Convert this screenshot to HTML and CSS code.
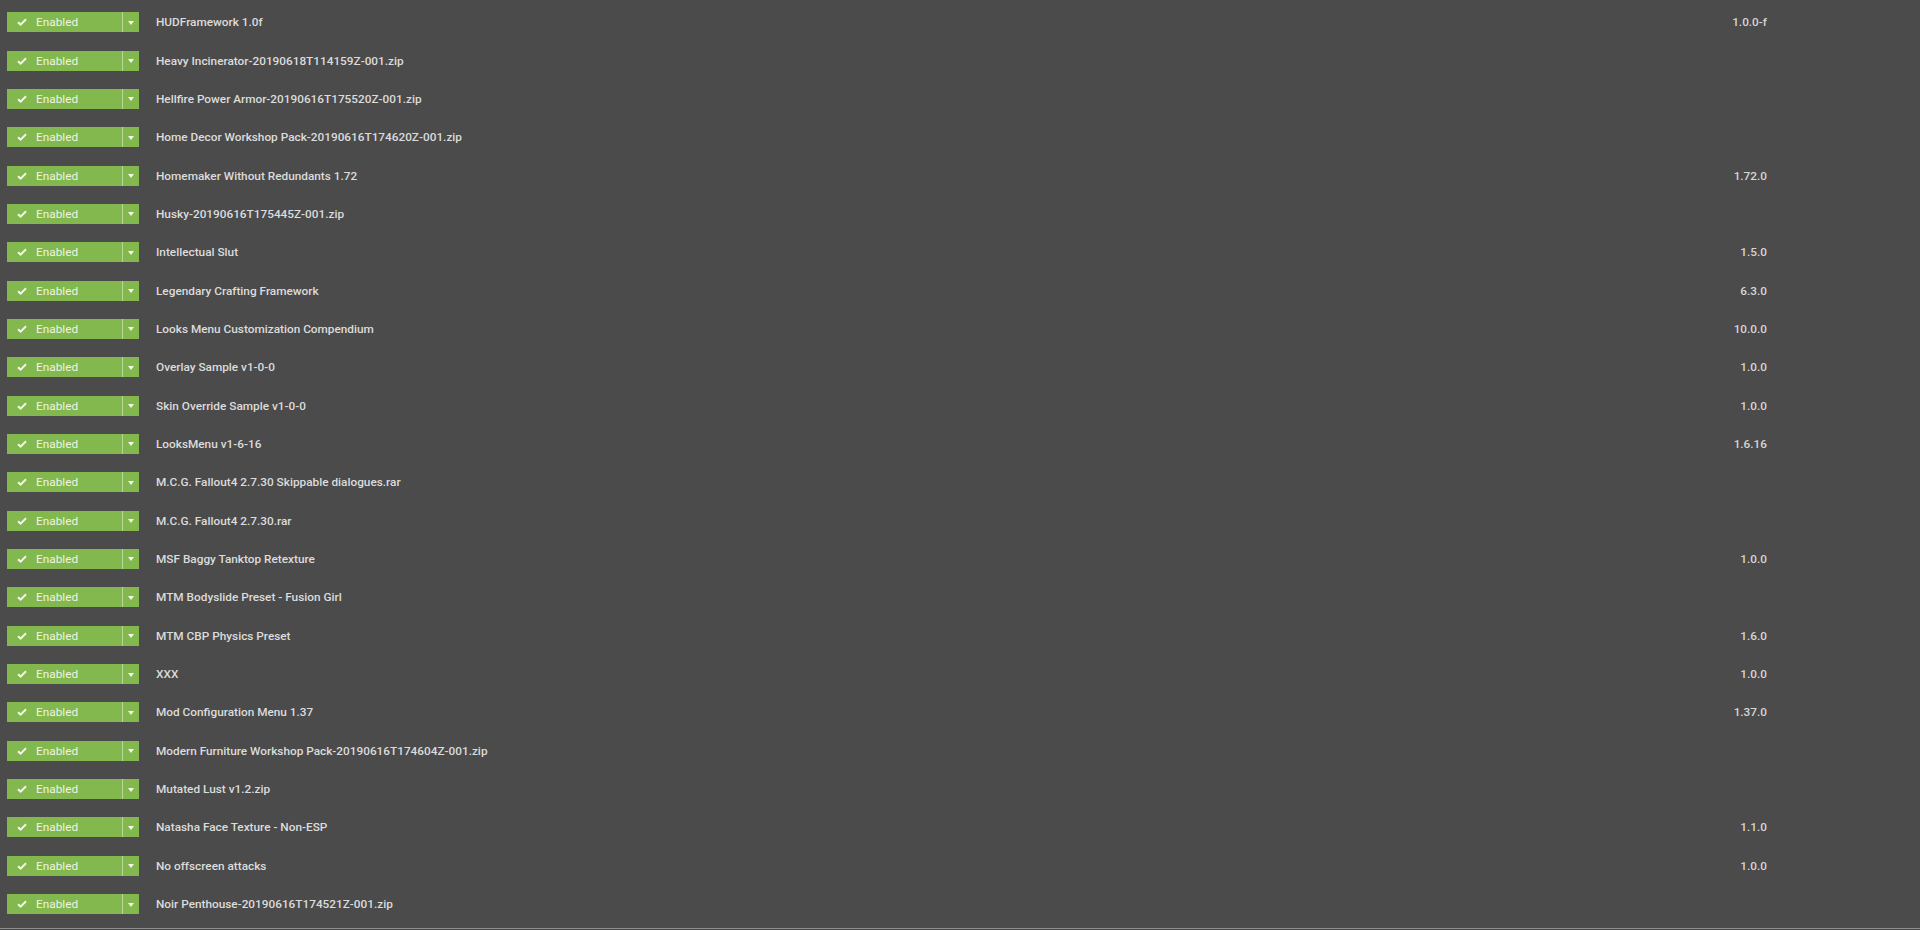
FILE: index.html
```html
<!DOCTYPE html>
<html>
<head>
<meta charset="utf-8">
<link rel="stylesheet" href="styles.css">
</head>
<body>
<div class="list">
  <div class="row"><div class="toggle"><span class="main"><svg class="check" viewBox="0 0 10 8"><path d="M1 4.2 L3.6 6.6 L9 1.2" /></svg>Enabled</span><span class="drop"><i class="tri"></i></span></div><div class="name">HUDFramework 1.0f</div><div class="ver">1.0.0-f</div></div>
  <div class="row"><div class="toggle"><span class="main"><svg class="check" viewBox="0 0 10 8"><path d="M1 4.2 L3.6 6.6 L9 1.2" /></svg>Enabled</span><span class="drop"><i class="tri"></i></span></div><div class="name">Heavy Incinerator-20190618T114159Z-001.zip</div><div class="ver"></div></div>
  <div class="row"><div class="toggle"><span class="main"><svg class="check" viewBox="0 0 10 8"><path d="M1 4.2 L3.6 6.6 L9 1.2" /></svg>Enabled</span><span class="drop"><i class="tri"></i></span></div><div class="name">Hellfire Power Armor-20190616T175520Z-001.zip</div><div class="ver"></div></div>
  <div class="row"><div class="toggle"><span class="main"><svg class="check" viewBox="0 0 10 8"><path d="M1 4.2 L3.6 6.6 L9 1.2" /></svg>Enabled</span><span class="drop"><i class="tri"></i></span></div><div class="name">Home Decor Workshop Pack-20190616T174620Z-001.zip</div><div class="ver"></div></div>
  <div class="row"><div class="toggle"><span class="main"><svg class="check" viewBox="0 0 10 8"><path d="M1 4.2 L3.6 6.6 L9 1.2" /></svg>Enabled</span><span class="drop"><i class="tri"></i></span></div><div class="name">Homemaker Without Redundants 1.72</div><div class="ver">1.72.0</div></div>
  <div class="row"><div class="toggle"><span class="main"><svg class="check" viewBox="0 0 10 8"><path d="M1 4.2 L3.6 6.6 L9 1.2" /></svg>Enabled</span><span class="drop"><i class="tri"></i></span></div><div class="name">Husky-20190616T175445Z-001.zip</div><div class="ver"></div></div>
  <div class="row"><div class="toggle"><span class="main"><svg class="check" viewBox="0 0 10 8"><path d="M1 4.2 L3.6 6.6 L9 1.2" /></svg>Enabled</span><span class="drop"><i class="tri"></i></span></div><div class="name">Intellectual Slut</div><div class="ver">1.5.0</div></div>
  <div class="row"><div class="toggle"><span class="main"><svg class="check" viewBox="0 0 10 8"><path d="M1 4.2 L3.6 6.6 L9 1.2" /></svg>Enabled</span><span class="drop"><i class="tri"></i></span></div><div class="name">Legendary Crafting Framework</div><div class="ver">6.3.0</div></div>
  <div class="row"><div class="toggle"><span class="main"><svg class="check" viewBox="0 0 10 8"><path d="M1 4.2 L3.6 6.6 L9 1.2" /></svg>Enabled</span><span class="drop"><i class="tri"></i></span></div><div class="name">Looks Menu Customization Compendium</div><div class="ver">10.0.0</div></div>
  <div class="row"><div class="toggle"><span class="main"><svg class="check" viewBox="0 0 10 8"><path d="M1 4.2 L3.6 6.6 L9 1.2" /></svg>Enabled</span><span class="drop"><i class="tri"></i></span></div><div class="name">Overlay Sample v1-0-0</div><div class="ver">1.0.0</div></div>
  <div class="row"><div class="toggle"><span class="main"><svg class="check" viewBox="0 0 10 8"><path d="M1 4.2 L3.6 6.6 L9 1.2" /></svg>Enabled</span><span class="drop"><i class="tri"></i></span></div><div class="name">Skin Override Sample v1-0-0</div><div class="ver">1.0.0</div></div>
  <div class="row"><div class="toggle"><span class="main"><svg class="check" viewBox="0 0 10 8"><path d="M1 4.2 L3.6 6.6 L9 1.2" /></svg>Enabled</span><span class="drop"><i class="tri"></i></span></div><div class="name">LooksMenu v1-6-16</div><div class="ver">1.6.16</div></div>
  <div class="row"><div class="toggle"><span class="main"><svg class="check" viewBox="0 0 10 8"><path d="M1 4.2 L3.6 6.6 L9 1.2" /></svg>Enabled</span><span class="drop"><i class="tri"></i></span></div><div class="name">M.C.G. Fallout4 2.7.30 Skippable dialogues.rar</div><div class="ver"></div></div>
  <div class="row"><div class="toggle"><span class="main"><svg class="check" viewBox="0 0 10 8"><path d="M1 4.2 L3.6 6.6 L9 1.2" /></svg>Enabled</span><span class="drop"><i class="tri"></i></span></div><div class="name">M.C.G. Fallout4 2.7.30.rar</div><div class="ver"></div></div>
  <div class="row"><div class="toggle"><span class="main"><svg class="check" viewBox="0 0 10 8"><path d="M1 4.2 L3.6 6.6 L9 1.2" /></svg>Enabled</span><span class="drop"><i class="tri"></i></span></div><div class="name">MSF Baggy Tanktop Retexture</div><div class="ver">1.0.0</div></div>
  <div class="row"><div class="toggle"><span class="main"><svg class="check" viewBox="0 0 10 8"><path d="M1 4.2 L3.6 6.6 L9 1.2" /></svg>Enabled</span><span class="drop"><i class="tri"></i></span></div><div class="name">MTM Bodyslide Preset - Fusion Girl</div><div class="ver"></div></div>
  <div class="row"><div class="toggle"><span class="main"><svg class="check" viewBox="0 0 10 8"><path d="M1 4.2 L3.6 6.6 L9 1.2" /></svg>Enabled</span><span class="drop"><i class="tri"></i></span></div><div class="name">MTM CBP Physics Preset</div><div class="ver">1.6.0</div></div>
  <div class="row"><div class="toggle"><span class="main"><svg class="check" viewBox="0 0 10 8"><path d="M1 4.2 L3.6 6.6 L9 1.2" /></svg>Enabled</span><span class="drop"><i class="tri"></i></span></div><div class="name">XXX</div><div class="ver">1.0.0</div></div>
  <div class="row"><div class="toggle"><span class="main"><svg class="check" viewBox="0 0 10 8"><path d="M1 4.2 L3.6 6.6 L9 1.2" /></svg>Enabled</span><span class="drop"><i class="tri"></i></span></div><div class="name">Mod Configuration Menu 1.37</div><div class="ver">1.37.0</div></div>
  <div class="row"><div class="toggle"><span class="main"><svg class="check" viewBox="0 0 10 8"><path d="M1 4.2 L3.6 6.6 L9 1.2" /></svg>Enabled</span><span class="drop"><i class="tri"></i></span></div><div class="name">Modern Furniture Workshop Pack-20190616T174604Z-001.zip</div><div class="ver"></div></div>
  <div class="row"><div class="toggle"><span class="main"><svg class="check" viewBox="0 0 10 8"><path d="M1 4.2 L3.6 6.6 L9 1.2" /></svg>Enabled</span><span class="drop"><i class="tri"></i></span></div><div class="name">Mutated Lust v1.2.zip</div><div class="ver"></div></div>
  <div class="row"><div class="toggle"><span class="main"><svg class="check" viewBox="0 0 10 8"><path d="M1 4.2 L3.6 6.6 L9 1.2" /></svg>Enabled</span><span class="drop"><i class="tri"></i></span></div><div class="name">Natasha Face Texture - Non-ESP</div><div class="ver">1.1.0</div></div>
  <div class="row"><div class="toggle"><span class="main"><svg class="check" viewBox="0 0 10 8"><path d="M1 4.2 L3.6 6.6 L9 1.2" /></svg>Enabled</span><span class="drop"><i class="tri"></i></span></div><div class="name">No offscreen attacks</div><div class="ver">1.0.0</div></div>
  <div class="row"><div class="toggle"><span class="main"><svg class="check" viewBox="0 0 10 8"><path d="M1 4.2 L3.6 6.6 L9 1.2" /></svg>Enabled</span><span class="drop"><i class="tri"></i></span></div><div class="name">Noir Penthouse-20190616T174521Z-001.zip</div><div class="ver"></div></div>
</div>
</body>
</html>
```

FILE: styles.css
```css
* { box-sizing: border-box; }
html, body {
  margin: 0;
  padding: 0;
  width: 1920px;
  height: 930px;
  overflow: hidden;
  background: #4b4b4b;
  font-family: Roboto, "Liberation Sans", sans-serif;
}
.list {
  height: 929px;
  padding-top: 3px;
  border-bottom: 1px solid #8c8c8c;
  overflow: hidden;
}
.row {
  height: 38.35px;
  display: flex;
  align-items: center;
  padding-left: 7px;
  padding-right: 153px;
}
.toggle {
  display: flex;
  width: 132px;
  height: 20px;
  background: #83b84e;
  flex: none;
}
.main {
  width: 116px;
  display: flex;
  align-items: center;
  padding-left: 10px;
  color: #edf4e4;
  font-size: 11.8px;
  border-right: 1px solid #b9d898;
}
.check {
  width: 10px;
  height: 8px;
  margin-right: 9px;
  fill: none;
  stroke: #f1f7ea;
  stroke-width: 2;
}
.drop {
  flex: 1;
  display: flex;
  align-items: center;
  justify-content: center;
}
.tri {
  width: 0;
  height: 0;
  border-left: 3.5px solid transparent;
  border-right: 3.5px solid transparent;
  border-top: 4px solid #f1f7ea;
  margin-top: 1px;
}
.name {
  flex: 1;
  margin-left: 17px;
  color: #dcdcdc;
  font-size: 11.8px;
  font-weight: 500;
}
.ver {
  color: #d6d6d6;
  font-size: 11.8px;
  font-weight: 500;
  text-align: right;
}
```
